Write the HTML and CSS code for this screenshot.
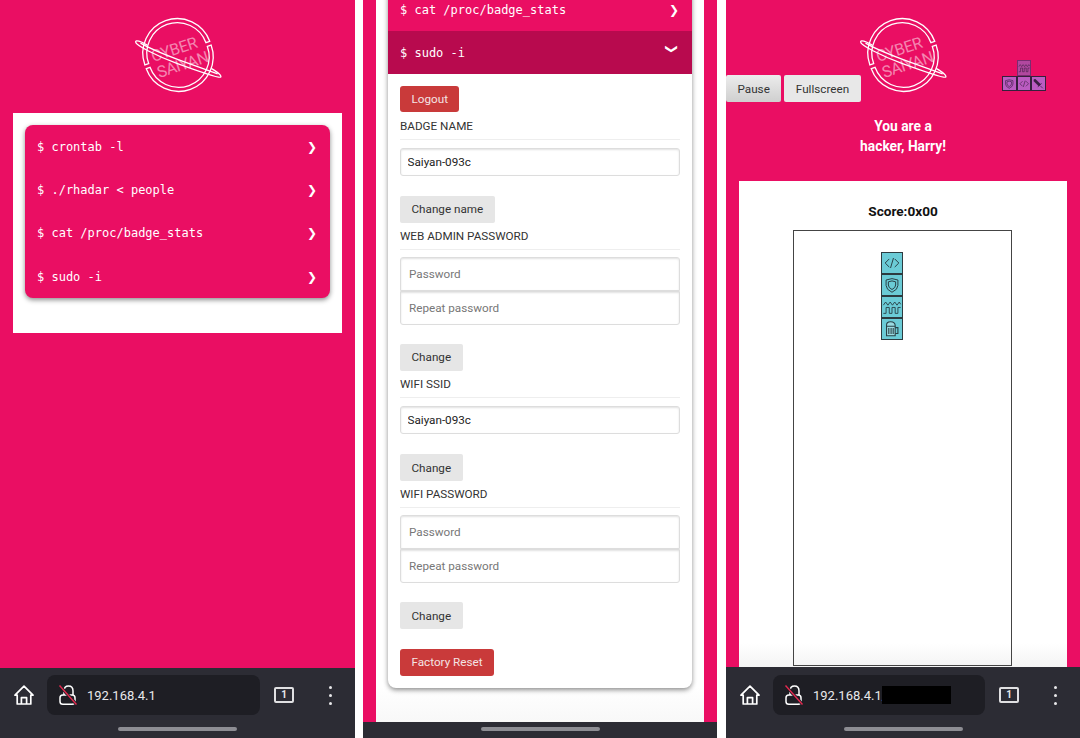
FILE: index.html
```html
<!DOCTYPE html>

<html>

<head>
    <meta charset="utf-8">

    <link rel="stylesheet" href="styles.css">
</head>

<body>
<svg class="defs" width="0" height="0">
    <symbol id="logo-art" viewBox="-55 -55 110 110">
        <g transform="rotate(-20)" fill="none" stroke="#fff" stroke-width="1.3">
            <path d="M-34.5 -2 A34.5 34.5 0 0 1 34.5 -2 L30.5 -2 A30.5 30.5 0 0 0 -30.5 -2 Z"/>
            <path d="M-34.5 2 A34.5 34.5 0 0 0 34.5 2 L30.5 2 A30.5 30.5 0 0 1 -30.5 2 Z"/>
        </g>
        <g transform="translate(0 5) rotate(20)" fill="none" stroke="#fff" stroke-width="1.3">
            <path d="M-34 -3.5 C-42 -5 -46.5 -4.5 -46 -2.5 C-45 0.5 -22 3.5 0 3.5 C22 3.5 45 3.5 46 1.5 C46.5 -0.5 42 -2 34 -3.5"/>
            <path d="M-41 -3 C-30 -1 -15 -0.5 0 -0.5 C15 -0.5 30 -0.5 42 -0.5"/>
        </g>
    </symbol>

    <symbol id="icon-code" viewBox="0 0 22 22">
        <path d="M8 6.5 L3.5 11 L8 15.5 M14 6.5 L18.5 11 L14 15.5 M12.6 5.5 L9.4 16.5" fill="none" stroke="currentColor" stroke-width="1.1"/>
    </symbol>
    <symbol id="icon-shield" viewBox="0 0 22 22">
        <path d="M4.5 5.5 Q11 2.5 17.5 5.5 V11.5 Q17.5 16 11 19 Q4.5 16 4.5 11.5 Z" fill="none" stroke="currentColor" stroke-width="1.1"/>
        <path d="M7 7.5 Q11 5.5 15 7.5 V11 Q15 14 11 16 Q7 14 7 11 Z" fill="none" stroke="currentColor" stroke-width="1.1"/>
    </symbol>
    <symbol id="icon-wave" viewBox="0 0 22 22">
        <path d="M1.5 9 L4 5.5 L6.5 9 L9 5.5 L11.5 9 L14 5.5 L16.5 9 L19 5.5 L20.5 8" fill="none" stroke="currentColor" stroke-width="1"/>
        <path d="M1.5 18 H4.5 V11.5 H8 V18 H11 V11.5 H14.5 V18 H17.5 V11.5 H20.5" fill="none" stroke="currentColor" stroke-width="1"/>
    </symbol>
    <symbol id="icon-mug" viewBox="0 0 22 22">
        <path d="M5 7.5 Q4.5 3 9.5 3 Q14.5 3 14.5 7.5 V18.5 H5 Z" fill="#9adbe2" stroke="currentColor" stroke-width="1.2"/>
        <path d="M5 8 H14.5 M14.5 9.5 H17.5 V16 H14.5 M7.5 10 V16.5 M10 10 V16.5 M12.3 10 V16.5" fill="none" stroke="currentColor" stroke-width="1.2"/>
    </symbol>
    <symbol id="icon-sword" viewBox="0 0 22 22">
        <path d="M3.5 3.5 L6.5 3.5 L15 12 L12 15 L3.5 6.5 Z M10 17 L17 10 M14.5 14.5 L19 19" fill="currentColor" stroke="currentColor" stroke-width="1.2"/>
    </symbol>

    <symbol id="icon-home" viewBox="0 0 20 20">
        <path d="M1 10.2 L10 1.2 L19 10.2 H16.8 V19 H3.2 V10.2 Z M7.4 19 V12.6 H12.6 V19" fill="none" stroke="currentColor" stroke-width="1.7" stroke-linejoin="round"/>
    </symbol>
    <symbol id="icon-lock" viewBox="0 0 18 20">
        <path d="M5 10 V6 Q5 1 9.5 1 Q14 1 14 6 V10" fill="none" stroke="#fff" stroke-width="1.5"/>
        <rect x="1" y="10" width="15" height="9.2" rx="2.8" fill="none" stroke="#fff" stroke-width="1.5"/>
        <path d="M0.5 0.5 L17.5 19.5" stroke="#1e1e24" stroke-width="3.2"/>
        <path d="M0.5 0.5 L17.5 19.5" stroke="#e5294f" stroke-width="1.4"/>
    </symbol>
</svg>

<div class="screens">
    <section class="phone">
        <div class="page">
            <svg class="logo" viewBox="-55 -55 110 110">
                <use href="#logo-art" x="-55" y="-55" width="110" height="110"/>
                <g transform="rotate(-18)" class="logo-text" text-anchor="middle">
                    <text x="-2" y="-1">CYBER</text>
                    <text x="1.5" y="16">SAIYAN</text>
                </g>
            </svg>
            <div class="card">
                <div class="accordion">
                    <div class="row"><span>$ crontab -l</span><span class="chevron">❯</span></div>
                    <div class="row"><span>$ ./rhadar &lt; people</span><span class="chevron">❯</span></div>
                    <div class="row"><span>$ cat /proc/badge_stats</span><span class="chevron">❯</span></div>
                    <div class="row"><span>$ sudo -i</span><span class="chevron">❯</span></div>
                </div>
            </div>
        </div>
        <div class="navbar">
            <div class="navrow">
                <svg class="home"><use href="#icon-home"/></svg>
                <div class="urlbar">
                    <svg class="lock"><use href="#icon-lock"/></svg>
                    <span class="url">192.168.4.1</span>
                </div>
                <span class="tabs">1</span>
                <span class="dots"><i></i><i></i><i></i></span>
            </div>
            <div class="handle"></div>
        </div>
    </section>

    <section class="phone phone-settings">
        <div class="page">
            <div class="card card-scrolled">
                <div class="accordion accordion-open">
                    <div class="row"><span>$ cat /proc/badge_stats</span><span class="chevron">❯</span></div>
                    <div class="row row-open"><span>$ sudo -i</span><span class="chevron">❯</span></div>
                    <form class="panel">
                        <button class="btn btn-red" type="button">Logout</button>

                        <div class="label">BADGE NAME</div>
                        <input class="input input-filled" type="text" value="Saiyan-093c">
                        <button class="btn btn-spaced" type="button">Change name</button>

                        <div class="label">WEB ADMIN PASSWORD</div>
                        <div class="group">
                            <input class="input" type="password" placeholder="Password">
                            <input class="input" type="password" placeholder="Repeat password">
                        </div>
                        <button class="btn btn-spaced" type="button">Change</button>

                        <div class="label">WIFI SSID</div>
                        <input class="input input-filled" type="text" value="Saiyan-093c">
                        <button class="btn btn-spaced" type="button">Change</button>

                        <div class="label">WIFI PASSWORD</div>
                        <div class="group">
                            <input class="input" type="password" placeholder="Password">
                            <input class="input" type="password" placeholder="Repeat password">
                        </div>
                        <button class="btn btn-spaced" type="button">Change</button>

                        <button class="btn btn-red btn-reset" type="button">Factory Reset</button>
                    </form>
                </div>
            </div>
        </div>
        <div class="navbar navbar-short">
            <div class="handle"></div>
        </div>
    </section>

    <section class="phone phone-game">
        <div class="page">
            <div class="game-head">
                <svg class="logo" viewBox="-55 -55 110 110">
                    <use href="#logo-art" x="-55" y="-55" width="110" height="110"/>
                    <g transform="rotate(-18)" class="logo-text" text-anchor="middle">
                        <text x="-2" y="-1">CYBER</text>
                        <text x="1.5" y="16">SAIYAN</text>
                    </g>
                </svg>
                <div class="controls">
                    <button class="btn btn-game btn-pressed" type="button">Pause</button>
                    <button class="btn btn-game" type="button">Fullscreen</button>
                </div>
                <div class="preview">
                    <span class="tile tile-small tile-dim"><svg><use href="#icon-wave"/></svg></span>
                    <div class="preview-row">
                        <span class="tile tile-small"><svg><use href="#icon-shield"/></svg></span>
                        <span class="tile tile-small"><svg><use href="#icon-code"/></svg></span>
                        <span class="tile tile-small"><svg><use href="#icon-sword"/></svg></span>
                    </div>
                </div>
            </div>
            <h1 class="title">You are a<br>hacker, Harry!</h1>
            <div class="card card-game">
                <div class="score">Score:0x00</div>
                <div class="board">
                    <div class="piece">
                        <span class="tile"><svg><use href="#icon-code"/></svg></span>
                        <span class="tile"><svg><use href="#icon-shield"/></svg></span>
                        <span class="tile"><svg><use href="#icon-wave"/></svg></span>
                        <span class="tile"><svg><use href="#icon-mug"/></svg></span>
                    </div>
                </div>
            </div>
        </div>
        <div class="navbar navbar-tall">
            <div class="navrow">
                <svg class="home"><use href="#icon-home"/></svg>
                <div class="urlbar">
                    <svg class="lock"><use href="#icon-lock"/></svg>
                    <span class="url">192.168.4.1/</span>
                    <span class="redacted"></span>
                </div>
                <span class="tabs">1</span>
                <span class="dots"><i></i><i></i><i></i></span>
            </div>
            <div class="handle"></div>
        </div>
    </section>
</div>
</body>
</html>
```

FILE: styles.css
```css
* {
    box-sizing: border-box;
}

html, body {
    margin: 0;
    height: 738px;
    overflow: hidden;
    background-color: #fff;
    font-family: Roboto, sans-serif;
}

.defs {
    display: block;
    height: 0;
}

.screens {
    display: flex;
    height: 738px;
}

.phone {
    width: 354px;
    height: 738px;
    display: flex;
    flex-direction: column;
    background-color: #ea0e63;
    overflow: hidden;
}

.phone:first-child {
    width: 355px;
}

.phone-settings {
    margin-left: 8px;
}

.phone-game {
    margin-left: 9px;
}

.page {
    flex: 1;
    min-height: 0;
    display: flex;
    flex-direction: column;
    overflow: hidden;
}

.logo {
    display: block;
    width: 110px;
    height: 110px;
    margin: 0 auto 3px;
    flex: none;
}

.logo-text {
    font-family: Roboto, sans-serif;
    font-weight: 400;
    font-size: 16px;
    letter-spacing: -0.3px;
    fill: rgba(255, 255, 255, 0.5);
}

.card {
    margin: 0 13px;
    padding: 12px;
    height: 220px;
    background-color: #fff;
}

.accordion {
    background-color: #ea0e63;
    border-radius: 8px;
    box-shadow: 0 2px 5px rgba(0, 0, 0, 0.45);
}

.row {
    height: 43.3px;
    padding: 0 13px 0 12px;
    display: flex;
    justify-content: space-between;
    align-items: center;
    color: #fff;
    font-family: "DejaVu Sans Mono", monospace;
    font-size: 12px;
}

.chevron {
    font-family: "DejaVu Sans", sans-serif;
    font-size: 12px;
}

/* settings screen, scrolled down */
.card-scrolled {
    flex: 1;
    height: auto;
    padding-top: 0;
    background: linear-gradient(#fff 95%, #f8f8f8);
}

.accordion-open {
    margin-top: -12px;
    background-color: #fff;
    border-radius: 0 0 8px 8px;
}

.accordion-open .row:first-child {
    background-color: #ea0e63;
}

.accordion-open .row {
    height: 43px;
}

.row-open {
    background-color: #b80a4e;
}

.row-open .chevron {
    transform: rotate(90deg) translate(-4px, 2px);
}

.panel {
    height: 614px;
    padding: 11.7px 12px 0;
    display: flex;
    flex-direction: column;
    align-items: flex-start;
}

.btn {
    height: 26.7px;
    padding: 0 11.5px;
    border: none;
    border-radius: 2px;
    background-color: #e6e6e6;
    color: #333;
    font-family: Roboto, sans-serif;
    font-size: 11.7px;
    flex: none;
}

.btn-red {
    background-color: #c93a3a;
    color: #f4e4e4;
    border-radius: 3px;
}

.btn-spaced {
    margin-top: 20px;
}

.btn-reset {
    margin-top: 20px;
}

.label {
    width: 100%;
    margin-top: 6.5px;
    margin-bottom: 8px;
    padding-bottom: 6px;
    border-bottom: 1px solid #eee;
    color: #333;
    font-size: 11.7px;
    line-height: 14px;
    flex: none;
}

.input {
    display: block;
    width: 100%;
    height: 28px;
    padding: 0 6.5px;
    border: 1px solid #ddd;
    border-radius: 3px;
    box-shadow: inset 0 1px 2px rgba(0, 0, 0, 0.12);
    font-family: Roboto, sans-serif;
    font-size: 11.7px;
    color: #222;
    flex: none;
}

.input::placeholder {
    color: #777;
}

.group {
    width: 100%;
    margin: -1px 0 -1px;
    flex: none;
}

.group .input {
    height: 34px;
    padding: 0 8px;
}

.group .input:first-child {
    border-radius: 3px 3px 0 0;
}

.group .input:last-child {
    border-radius: 0 0 3px 3px;
}

/* game screen */
.game-head {
    display: grid;
    height: 110px;
    flex: none;
}

.game-head > * {
    grid-area: 1 / 1;
}

.controls {
    display: flex;
    gap: 3px;
    align-self: start;
    margin-top: 75px;
    height: 27px;
}

.btn-game {
    height: 27px;
    background-color: #e8e8e8;
    padding: 0 11.5px;
}

.btn-pressed {
    background: linear-gradient(#ececec, #cfcfcf);
}

.preview {
    justify-self: end;
    align-self: start;
    margin: 60px 34.5px 0 0;
    display: flex;
    flex-direction: column;
    align-items: center;
}

.preview-row {
    display: flex;
}

.tile {
    display: block;
    width: 22px;
    height: 22px;
    border: 1px solid #2d3b40;
    background-color: #6bcbd6;
    color: #2a4147;
}

.tile svg {
    display: block;
    width: 100%;
    height: 100%;
}

.tile-small {
    width: 14.5px;
    height: 15.5px;
    background-color: #bb5cc2;
    border-color: #35203c;
    color: #3c1f44;
}

.tile-dim {
    background-color: #b1489f;
    border-color: #7a2c70;
}

.title {
    margin: 6px 0 0;
    height: 65px;
    color: #fff;
    font-size: 13.8px;
    font-weight: 700;
    line-height: 20px;
    text-align: center;
    flex: none;
}

.card-game {
    flex: 1;
    height: auto;
    padding: 0;
    display: flex;
    flex-direction: column;
    align-items: center;
    background: linear-gradient(#fff 95%, #f4f4f4);
}

.score {
    margin-top: 22px;
    height: 27px;
    font-size: 13.6px;
    font-weight: 700;
    line-height: 16px;
    color: #111;
}

.board {
    width: 219px;
    height: 436px;
    margin-right: 2px;
    padding: 21px 0 0 87px;
    border: 1px solid #444;
    flex: none;
}

/* phone browser chrome */
.navbar {
    height: 70px;
    padding-top: 7px;
    background-color: #2c2c34;
    flex: none;
}

.navbar-tall {
    height: 71px;
    padding-top: 8px;
}

.navbar-short {
    height: 16px;
    padding-top: 5px;
}

.navrow {
    height: 40px;
    padding-left: 14px;
    display: flex;
    align-items: center;
}

.home {
    width: 20px;
    height: 20px;
    color: #fff;
    flex: none;
}

.urlbar {
    width: 213px;
    height: 40px;
    margin-left: 13px;
    padding-left: 12px;
    display: flex;
    align-items: center;
    background-color: #1e1e24;
    border-radius: 8px;
    flex: none;
}

.phone-game .urlbar {
    width: 212px;
}

.lock {
    width: 18px;
    height: 20px;
    flex: none;
}

.url {
    margin-left: 10px;
    color: #e8e8ea;
    font-size: 13px;
}

.redacted {
    width: 69px;
    height: 18px;
    margin-left: -5px;
    background-color: #000;
}

.tabs {
    width: 20px;
    height: 16px;
    margin-left: 14px;
    border: 2px solid #e0e0e2;
    border-radius: 2px;
    color: #e8e8ea;
    font-size: 10px;
    font-weight: 700;
    line-height: 12px;
    text-align: center;
    flex: none;
}

.dots {
    margin-left: 35px;
    display: flex;
    flex-direction: column;
    gap: 5px;
}

.dots i {
    display: block;
    width: 3px;
    height: 3px;
    border-radius: 50%;
    background-color: #e8e8ea;
}

.handle {
    width: 119px;
    height: 4px;
    margin: 12px auto 0;
    border-radius: 2px;
    background-color: #8d8d93;
}

.navbar-short .handle {
    margin-top: 0;
}
```
